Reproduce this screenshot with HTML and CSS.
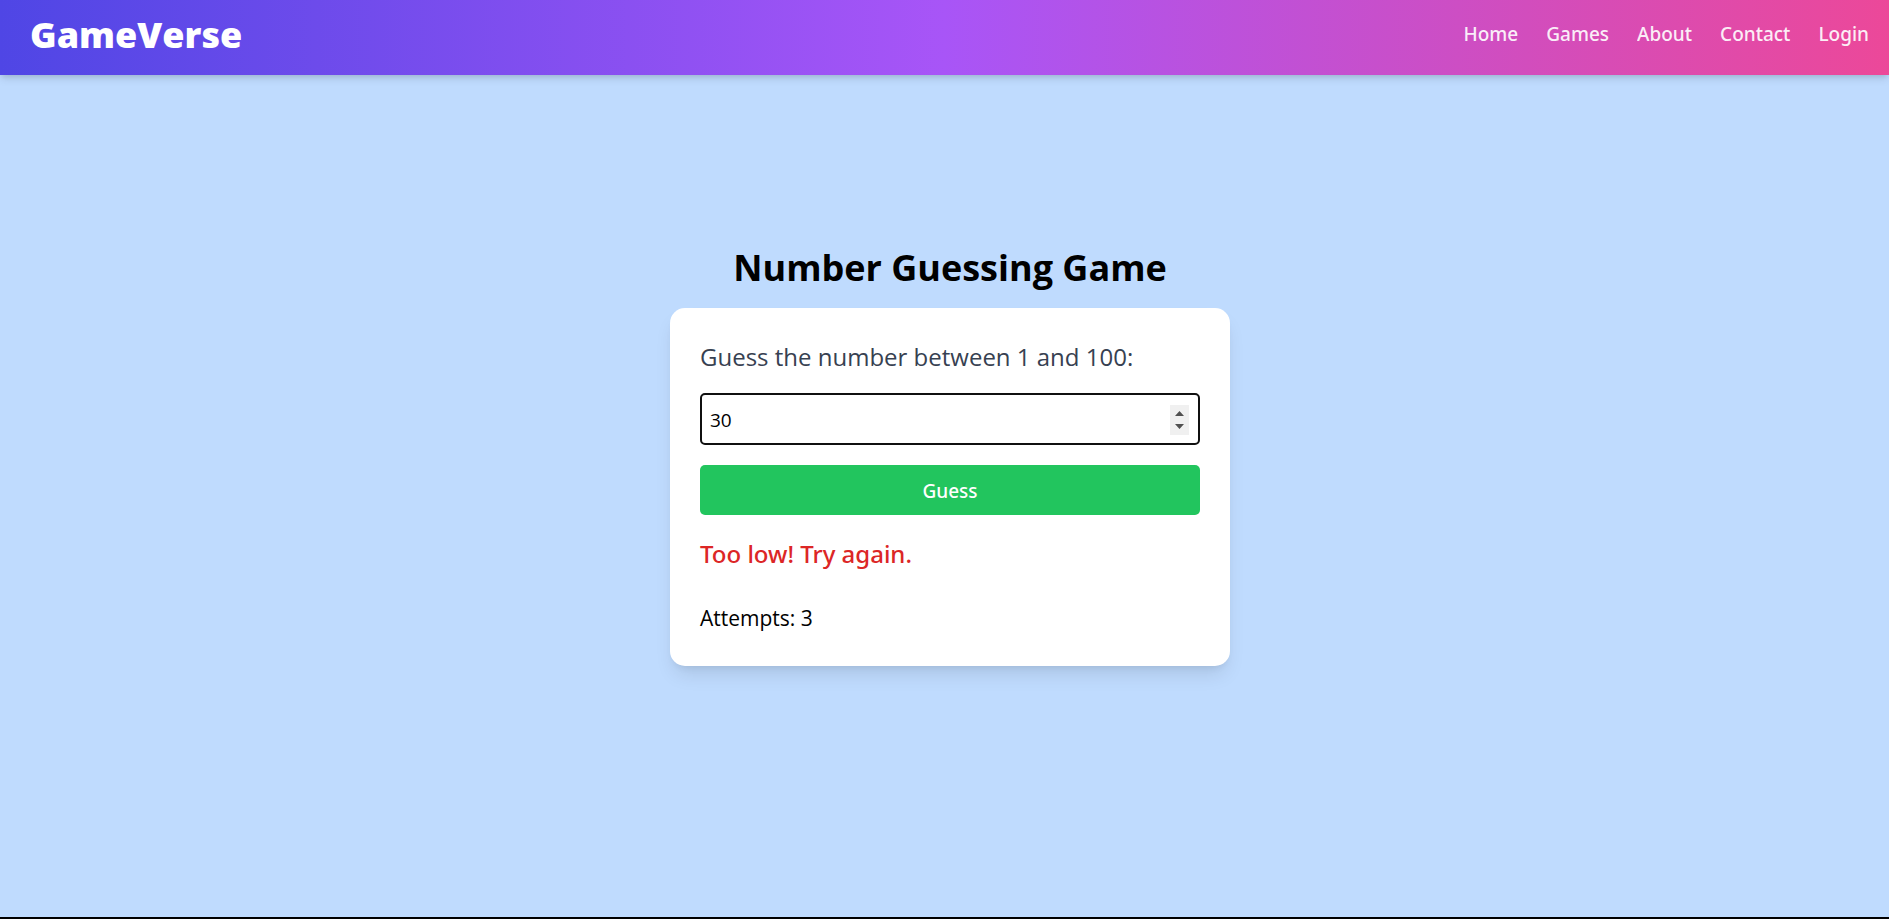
FILE: index.html
```html
<!DOCTYPE html>
<html lang="en">
<head>
<meta charset="utf-8">
<title>Number Guessing Game</title>
<link rel="stylesheet" href="styles.css">
</head>
<body>
<header class="header">
  <h1 class="logo">GameVerse</h1>
  <nav class="nav">
    <a href="#">Home</a>
    <a href="#">Games</a>
    <a href="#">About</a>
    <a href="#">Contact</a>
    <a href="#">Login</a>
  </nav>
</header>
<main class="main">
  <h2 class="title">Number Guessing Game</h2>
  <form class="card">
    <label class="prompt" for="guess">Guess the number between 1 and 100:</label>
    <input class="guess" id="guess" type="number" min="1" max="100" value="30">
    <button class="submit" type="button">Guess</button>
    <p class="feedback">Too low! Try again.</p>
    <p class="attempts">Attempts: 3</p>
  </form>
</main>
</body>
</html>
```
FILE: styles.css
```css
* {
  box-sizing: border-box;
  margin: 0;
}

body {
  display: flex;
  flex-direction: column;
  min-height: 100vh;
  background: #bfdbfe;
  border-bottom: 2px solid #000;
  color: #000;
  font-family: "Open Sans", "Noto Sans", sans-serif;
}

.header {
  display: flex;
  justify-content: space-between;
  height: 75px;
  padding: 10px 20px 15px 30px;
  background: linear-gradient(to right, #4f46e5, #a855f7, #ec4899);
  box-shadow: 0 5px 8px -1px rgba(0, 0, 0, 0.1), 0 3px 5px -2px rgba(0, 0, 0, 0.1);
  color: #fff;
}

.logo {
  font-size: 36px;
  font-weight: 800;
  line-height: 50px;
}

.nav {
  display: flex;
  gap: 28px;
}

.nav a {
  color: #fff;
  font-family: "Noto Sans", "Open Sans", sans-serif;
  font-size: 19px;
  font-weight: 500;
  line-height: 48px;
  text-decoration: none;
  opacity: 0.9;
}

.main {
  display: flex;
  flex: 1;
  flex-direction: column;
  align-items: center;
  padding: 168px 0 30px 11px;
}

.title {
  margin-bottom: 16px;
  font-size: 36px;
  font-weight: 700;
  line-height: 49px;
}

.card {
  display: flex;
  flex-direction: column;
  width: 100%;
  max-width: 560px;
  padding: 30px;
  border-radius: 15px;
  background: #fff;
  box-shadow: 0 12px 19px -4px rgba(0, 0, 0, 0.1), 0 5px 8px -5px rgba(0, 0, 0, 0.1);
}

.prompt {
  margin-bottom: 18px;
  color: #374151;
  font-size: 24px;
  line-height: 37px;
}

.guess {
  height: 52px;
  margin-bottom: 20px;
  padding: 9px 9px 8px 8px;
  border: 2px solid #101010;
  border-radius: 5px;
  background: #fff;
  color: #000;
  font: 400 19px/30px "Open Sans", "Noto Sans", sans-serif;
}

.guess::-webkit-inner-spin-button {
  -webkit-appearance: none;
  width: 19px;
  height: 30px;
  background: #f0f0f0 url("data:image/svg+xml,%3Csvg xmlns='http://www.w3.org/2000/svg' width='19' height='30'%3E%3Cpath d='M5 11 9.500 6 14 11zM5 19 9.500 24 14 19z' fill='%23505050'/%3E%3C/svg%3E") center no-repeat;
  opacity: 1;
}

.submit {
  height: 50px;
  margin-bottom: 20px;
  padding: 2px 0 0;
  border: 0;
  border-radius: 5px;
  background: #22c55e;
  color: #fff;
  font: 500 19px/30px "Noto Sans", "Open Sans", sans-serif;
}

.feedback {
  margin-bottom: 29px;
  color: #dc2626;
  font-family: "Noto Sans", "Open Sans", sans-serif;
  font-size: 24px;
  font-weight: 500;
  line-height: 37px;
}

.attempts {
  font-size: 21px;
  line-height: 35px;
}
```
